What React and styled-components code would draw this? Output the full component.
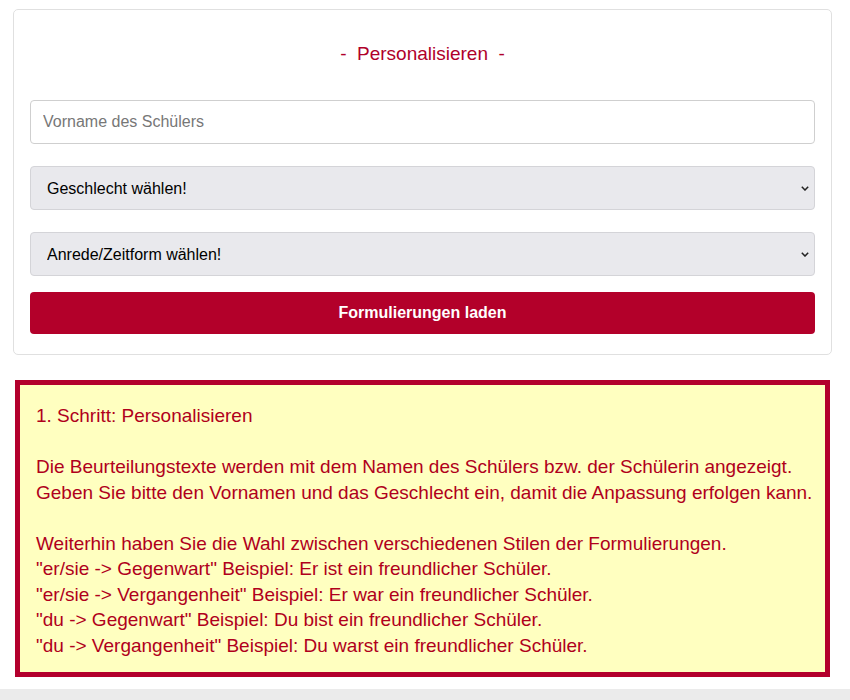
import React from 'react';
import styled, { createGlobalStyle } from 'styled-components';

const GlobalStyle = createGlobalStyle`
  body {
    margin: 0;
    background: #fff;
    font-family: "Liberation Sans", Arial, sans-serif;
  }
`;

const chevron =
  "data:image/svg+xml;utf8,<svg xmlns='http://www.w3.org/2000/svg' width='8' height='5' viewBox='0 0 8 5'><path d='M0.8 0.8 L4 4 L7.2 0.8' fill='none' stroke='%23222' stroke-width='1.5'/></svg>";

const Page = styled.div`
  display: flex;
  flex-direction: column;
  min-height: 700px;
`;

const Card = styled.div`
  margin: 9px 18px 0 13px;
  padding: 16px 16px 20px;
  border: 1px solid #e0e0e0;
  border-radius: 5px;
  display: flex;
  flex-direction: column;
`;

const Title = styled.h2`
  margin: 16px 0 34px;
  text-align: center;
  font-size: 19px;
  line-height: 24px;
  font-weight: 400;
  color: #b0002a;
`;

const Input = styled.input`
  box-sizing: border-box;
  height: 44px;
  padding: 0 12px;
  border: 1px solid #cfcfcf;
  border-radius: 4px;
  font-family: inherit;
  font-size: 16px;
  color: #222;
  background: #fff;
  margin-bottom: ${(p) => p.$gap}px;

  &::placeholder {
    color: #777;
  }
`;

const Select = styled.select`
  box-sizing: border-box;
  height: 44px;
  padding: 0 16px;
  border: 1px solid #d4d4d8;
  border-radius: 4px;
  appearance: none;
  background: #e9e9ed url("${chevron}") no-repeat right 5px center;
  font-family: inherit;
  font-size: 16px;
  color: #000;
  margin-bottom: ${(p) => p.$gap}px;
`;

const Button = styled.button`
  height: 42px;
  border: none;
  border-radius: 4px;
  background: #b3002a;
  color: #fff;
  font-family: inherit;
  font-size: 16px;
  font-weight: 700;
  cursor: pointer;
`;

const InfoBox = styled.div`
  margin: 25px 20px 0 15px;
  padding: 18px 16px 14px;
  border: 5px solid #b3002d;
  background: #ffffc0;
  color: #b0001c;
  font-size: 19px;
  line-height: 25.5px;
`;

const Line = styled.div`
  min-height: 25.5px;
  white-space: nowrap;
`;

const Footer = styled.div`
  margin-top: 12px;
  flex: 1;
  background: #ebebeb;
`;

const lines = [
  '1. Schritt: Personalisieren',
  '',
  'Die Beurteilungstexte werden mit dem Namen des Schülers bzw. der Schülerin angezeigt.',
  'Geben Sie bitte den Vornamen und das Geschlecht ein, damit die Anpassung erfolgen kann.',
  '',
  'Weiterhin haben Sie die Wahl zwischen verschiedenen Stilen der Formulierungen.',
  '"er/sie -> Gegenwart" Beispiel: Er ist ein freundlicher Schüler.',
  '"er/sie -> Vergangenheit" Beispiel: Er war ein freundlicher Schüler.',
  '"du -> Gegenwart" Beispiel: Du bist ein freundlicher Schüler.',
  '"du -> Vergangenheit" Beispiel: Du warst ein freundlicher Schüler.',
];

const App = () => {
  return (
    <Page>
      <GlobalStyle />
      <Card>
        <Title>-&nbsp; Personalisieren &nbsp;-</Title>
        <Input $gap={22} placeholder="Vorname des Schülers" />
        <Select $gap={22} defaultValue="">
          <option value="">Geschlecht wählen!</option>
          <option value="m">männlich</option>
          <option value="w">weiblich</option>
        </Select>
        <Select $gap={16} defaultValue="">
          <option value="">Anrede/Zeitform wählen!</option>
          <option value="1">er/sie -&gt; Gegenwart</option>
          <option value="2">er/sie -&gt; Vergangenheit</option>
          <option value="3">du -&gt; Gegenwart</option>
          <option value="4">du -&gt; Vergangenheit</option>
        </Select>
        <Button>Formulierungen laden</Button>
      </Card>
      <InfoBox>
        {lines.map((l, i) => (
          <Line key={i}>{l}</Line>
        ))}
      </InfoBox>
      <Footer />
    </Page>
  );
};

export default App;
